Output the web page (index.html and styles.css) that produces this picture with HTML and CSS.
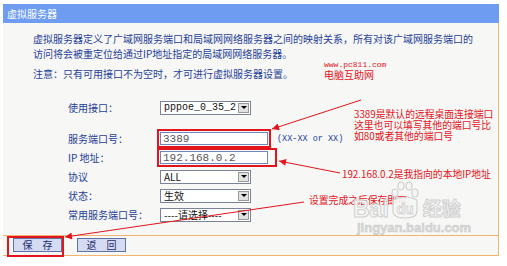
FILE: index.html
```html
<!DOCTYPE html>
<html lang="zh-CN">
<head>
    <meta charset="UTF-8">
    <title>虚拟服务器</title>
    <link rel="stylesheet" href="styles.css">
</head>
<body>
    <div class="page">
        <div class="panel">
            <div class="title">虚拟服务器</div>
            <div class="body">
                <div class="desc">
                    <p>虚拟服务器定义了广域网服务端口和局域网网络服务器之间的映射关系，所有对该广域网服务端口的</p>
                    <p>访问将会被重定位给通过IP地址指定的局域网网络服务器。</p>
                    <p class="note">注意：只有可用接口不为空时，才可进行虚拟服务器设置。</p>
                </div>

                <div class="form">
                    <div class="row first">
                        <label>使用接口：</label>
                        <div class="select mono"><span>pppoe_0_35_2</span><i class="arrow"></i></div>
                    </div>
                    <div class="row">
                        <label>服务端口号：</label>
                        <span class="mark"><input class="text" type="text" value="3389"></span>
                        <span class="hint">(XX-XX or XX)</span>
                    </div>
                    <div class="row">
                        <label>IP 地址：</label>
                        <span class="mark wide"><input class="text" type="text" value="192.168.0.2"></span>
                    </div>
                    <div class="row">
                        <label>协议</label>
                        <div class="select"><span>ALL</span><i class="arrow"></i></div>
                    </div>
                    <div class="row">
                        <label>状态：</label>
                        <div class="select"><span>生效</span><i class="arrow"></i></div>
                    </div>
                    <div class="row">
                        <label>常用服务端口号：</label>
                        <div class="select"><span>----请选择----</span><i class="arrow"></i></div>
                    </div>
                </div>

                <div class="foot">
                    <button>保　存</button>
                    <button>返　回</button>
                </div>
            </div>
        </div>

        <!-- annotations drawn over the screen -->
        <svg class="arrows" width="507" height="266" viewBox="0 0 507 266">
            <defs>
                <marker id="head" viewBox="0 0 10 10" refX="10" refY="5" markerWidth="9" markerHeight="7" orient="auto">
                    <path d="M0 0 L10 5 L0 10 z" fill="#e3141c"/>
                </marker>
            </defs>
            <line x1="361" y1="100" x2="272" y2="129" marker-end="url(#head)"/>
            <line x1="340" y1="173" x2="279" y2="161" marker-end="url(#head)"/>
            <line x1="304" y1="202" x2="65" y2="237" marker-end="url(#head)"/>
        </svg>

        <div class="save-box"></div>

        <div class="site">
            <span class="site-url">www.pc811.com</span>
            <span class="site-name">电脑互助网</span>
        </div>
        <div class="note-port">3389是默认的远程桌面连接端口<br>这里也可以填写其他的端口号比<br>如80或者其他的端口号</div>
        <div class="note-ip">192.168.0.2是我指向的本地IP地址</div>
        <div class="note-save">设置完成之后保存即可</div>

        <div class="wm">
            <div class="wm-top">
                <span class="wm-bai">Bai</span>
                <svg class="wm-paw" width="30" height="38" viewBox="0 0 30 38">
                    <g fill="#f6f6f6" stroke="#cdcdcd" stroke-width="1.2">
                        <ellipse cx="5" cy="12" rx="3" ry="4"/>
                        <ellipse cx="11" cy="5" rx="3" ry="4"/>
                        <ellipse cx="19" cy="5" rx="3" ry="4"/>
                        <ellipse cx="25" cy="12" rx="3" ry="4"/>
                        <path d="M3 19 Q15 13 27 19 L27 30 Q27 37 15 37 Q3 37 3 30 z"/>
                    </g>
                    <text x="15" y="33" text-anchor="middle">du</text>
                </svg>
                <span class="wm-jy">经验</span>
            </div>
            <div class="wm-url">jingyan.baidu.com</div>
        </div>
    </div>
</body>
</html>
```

FILE: styles.css
```css
:root {
    --blue-text: #1f3f99;
    --orange: #f2b36f;
    --red: #e3141c;
}

body {
    margin: 0;
    background: #fff;
    font-family: "Noto Sans CJK SC", sans-serif;
    font-size: 10px;
}

.page {
    position: relative;
    width: 507px;
    height: 266px;
    overflow: hidden;
}

.panel {
    width: 496px;
    margin: 4px 0 0 3px;
}

.title {
    height: 19px;
    line-height: 19px;
    background: #6d9cf0;
    color: #fff;
    padding-left: 4px;
}

.body {
    background: #f7f7f5;
    border-right: 1px solid var(--orange);
    border-bottom: 1px solid var(--orange);
    color: var(--blue-text);
}

.desc {
    padding: 8px 0 0 30px;
}

.desc p {
    margin: 0;
    line-height: 15px;
}

.desc .note {
    margin-top: 5px;
}

.form {
    margin-top: 17px;
    padding-left: 65px;
}

.row {
    display: flex;
    align-items: center;
    height: 19px;
}

.row.first {
    margin-bottom: 12px;
}

.row label {
    width: 92px;
    flex: none;
}

.select {
    width: 91px;
    height: 14px;
    box-sizing: border-box;
    border: 1px solid #7b8398;
    background: #fff;
    display: flex;
    align-items: center;
    justify-content: space-between;
    padding: 0 1px 0 3px;
    color: #111;
    font-size: 10px;
    line-height: 12px;
}

.select.mono {
    font-family: "Liberation Mono", monospace;
}

.arrow {
    width: 11px;
    height: 10px;
    box-sizing: border-box;
    background: #e2e2e2;
    border: 1px solid #9a9a9a;
    display: flex;
    align-items: center;
    justify-content: center;
}

.arrow::after {
    content: "";
    border-left: 3px solid transparent;
    border-right: 3px solid transparent;
    border-top: 3px solid #000;
}

.mark {
    display: inline-flex;
    border: 2px solid var(--red);
    padding: 1px;
    margin-left: -3px;
}

.mark.wide {
    padding-right: 7px;
}

.text {
    width: 108px;
    height: 13px;
    box-sizing: border-box;
    border: 1px solid #6f86b8;
    background: #fff;
    margin: 0;
    padding: 0 2px;
    font: 11px "Liberation Mono", monospace;
    color: #555;
}

.hint {
    margin-left: 6px;
    font: 8.5px "Liberation Mono", monospace;
    color: var(--blue-text);
}

.foot {
    margin-top: 11px;
    border-top: 1px solid var(--orange);
    padding: 2px 0 3px 10px;
    display: flex;
    gap: 15px;
}

.foot button {
    width: 49px;
    height: 14px;
    padding: 0;
    background: #d5dbf3;
    border: 1px solid #5f72a8;
    color: #1a2a6a;
    font: 10px "Noto Sans CJK SC", sans-serif;
    line-height: 12px;
}

/* annotations */
.arrows {
    position: absolute;
    left: 0;
    top: 0;
    pointer-events: none;
}

.arrows line {
    stroke: var(--red);
    stroke-width: 1;
}

.save-box {
    position: absolute;
    left: 7px;
    top: 236px;
    width: 57px;
    height: 21px;
    box-sizing: border-box;
    border: 2px solid var(--red);
}

.site {
    position: absolute;
    left: 324px;
    top: 61px;
    display: flex;
    flex-direction: column;
    color: var(--red);
}

.site-url {
    font: 8px "Liberation Mono", monospace;
    line-height: 8px;
}

.site-name {
    line-height: 12px;
}

.note-port,
.note-ip,
.note-save {
    position: absolute;
    color: var(--red);
    font-size: 9.8px;
    line-height: 11px;
    white-space: nowrap;
}

.note-port {
    left: 354px;
    top: 109px;
}

.note-ip {
    left: 342px;
    top: 169px;
}

.note-save {
    left: 309px;
    top: 195px;
}

.wm {
    position: absolute;
    left: 353px;
    top: 181px;
    width: 118px;
    color: #f8f8f8;
    font-family: "Liberation Sans", sans-serif;
    font-weight: bold;
    opacity: 0.9;
}

.wm-top {
    display: flex;
    align-items: flex-end;
    height: 38px;
}

.wm-bai {
    font-size: 23px;
    line-height: 20px;
    -webkit-text-stroke: 1px #cdcdcd;
}

.wm-paw {
    margin-left: 1px;
}

.wm-paw text {
    font: bold 14px "Liberation Sans", sans-serif;
    fill: #f8f8f8;
    stroke: #cdcdcd;
    stroke-width: 0.8;
}

.wm-jy {
    margin-left: 3px;
    font-family: "Noto Sans CJK SC", sans-serif;
    font-size: 19px;
    line-height: 22px;
    -webkit-text-stroke: 1px #cdcdcd;
}

.wm-url {
    margin: 3px 0 0 4px;
    font-size: 13px;
    line-height: 12px;
    color: #d6d6d6;
    -webkit-text-stroke: 0.4px #c2c2c2;
}
```
